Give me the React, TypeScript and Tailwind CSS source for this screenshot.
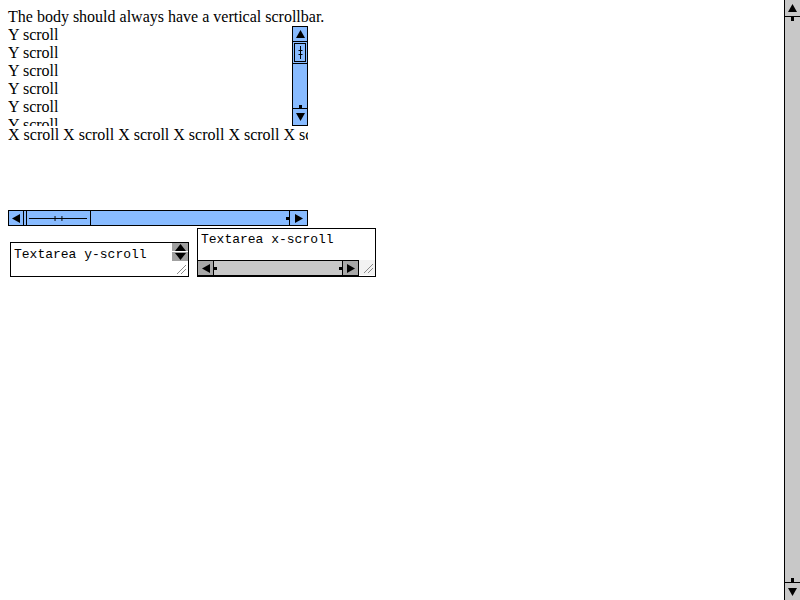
import React from 'react';

type Dir = 'up' | 'down' | 'left' | 'right';

const triPoints: Record<Dir, string> = {
  up: '4.5,0 9,8 0,8',
  down: '0,0 9,0 4.5,8',
  left: '8,0 8,9 0,4.5',
  right: '0,0 0,9 8,4.5',
};

function Tri({ dir }: { dir: Dir }) {
  const vert = dir === 'up' || dir === 'down';
  return (
    <svg width={vert ? 9 : 8} height={vert ? 8 : 9} viewBox={vert ? '0 0 9 8' : '0 0 8 9'}>
      <polygon points={triPoints[dir]} fill="#000" />
    </svg>
  );
}

// blue vertical scrollbar inside the Y box
function BlueVBar() {
  return (
    <div className="flex h-full w-[16px] shrink-0 flex-col border border-black bg-[#88bbff]">
      <div className="flex h-[15px] shrink-0 items-center justify-center border-b border-black">
        <Tri dir="up" />
      </div>
      <div className="flex h-[22px] shrink-0 items-center justify-center border-b border-black p-[1px]">
        <div className="flex h-full w-full items-center justify-center border border-black">
          <svg width="5" height="13" viewBox="0 0 5 13">
            <line x1="2.5" y1="0" x2="2.5" y2="13" stroke="#000" />
            <line x1="0.5" y1="4.5" x2="4.5" y2="4.5" stroke="#000" />
            <line x1="0.5" y1="8.5" x2="4.5" y2="8.5" stroke="#000" />
          </svg>
        </div>
      </div>
      <div className="flex flex-1 flex-col items-center justify-end">
        <div className="h-[3px] w-[3px] bg-black" />
      </div>
      <div className="flex h-[17px] shrink-0 items-center justify-center border-t border-black">
        <Tri dir="down" />
      </div>
    </div>
  );
}

// blue horizontal scrollbar under the X box
function BlueHBar() {
  return (
    <div className="flex h-[16px] w-full shrink-0 border border-black bg-[#88bbff]">
      <div className="flex w-[15px] shrink-0 items-center justify-center border-r border-black">
        <Tri dir="left" />
      </div>
      <div className="flex w-[67px] shrink-0 items-center border-r border-black px-[2px]">
        <div className="flex h-full w-full items-center border-l border-black">
          <svg width="62" height="5" viewBox="0 0 62 5">
            <line x1="2" y1="2.5" x2="61" y2="2.5" stroke="#000" />
            <line x1="28.5" y1="0" x2="28.5" y2="5" stroke="#000" />
            <line x1="35.5" y1="0" x2="35.5" y2="5" stroke="#000" />
          </svg>
        </div>
      </div>
      <div className="flex flex-1 items-center justify-end">
        <div className="h-[3px] w-[3px] bg-black" />
      </div>
      <div className="flex w-[18px] shrink-0 items-center justify-center border-l border-black">
        <Tri dir="right" />
      </div>
    </div>
  );
}

function Resizer({ bg }: { bg: string }) {
  return (
    <div className={`flex h-[15px] w-[16px] shrink-0 items-end justify-end overflow-hidden ${bg}`}>
      <svg width="16" height="15" viewBox="0 0 16 15">
        <line x1="14" y1="4" x2="5" y2="13" stroke="#8a8a8a" />
        <line x1="14" y1="8" x2="9" y2="13" stroke="#8a8a8a" />
      </svg>
    </div>
  );
}

function BodyBar() {
  return (
    <div className="flex h-[600px] w-[16px] shrink-0 flex-col border-l border-black bg-[#c8c8c8]">
      <div className="flex h-[17px] shrink-0 items-center justify-center border-b border-black">
        <Tri dir="up" />
      </div>
      <div className="flex flex-1 flex-col items-center justify-between">
        <div className="h-[4px] w-[3px] bg-black" />
        <div className="h-[4px] w-[3px] bg-black" />
      </div>
      <div className="flex h-[18px] shrink-0 items-center justify-center border-t border-black">
        <Tri dir="down" />
      </div>
    </div>
  );
}

export default function App() {
  const rows = Array.from({ length: 6 });
  return (
    <div className="flex h-[600px] w-[800px] overflow-hidden bg-white text-black">
      <div
        className="flex-1 p-[8px] text-[16px] leading-[18px]"
        style={{ fontFamily: '"Liberation Serif", serif' }}
      >
        <div className="whitespace-nowrap">The body should always have a vertical scrollbar.</div>

        {/* Y scroll box */}
        <div className="flex h-[100px] w-[300px] overflow-hidden">
          <div className="flex-1 overflow-hidden">
            {rows.map((_, i) => (
              <div key={i}>Y scroll</div>
            ))}
          </div>
          <BlueVBar />
        </div>

        {/* X scroll box */}
        <div className="flex h-[100px] w-[300px] flex-col overflow-hidden">
          <div className="flex-1 overflow-hidden whitespace-nowrap">
            X scroll X scroll X scroll X scroll X scroll X scroll
          </div>
          <BlueHBar />
        </div>

        {/* textareas */}
        <div
          className="mt-[2px] flex items-end gap-[8px] pl-[2px] text-[13px] leading-[15px]"
          style={{ fontFamily: '"Liberation Mono", monospace' }}
        >
          <div className="flex h-[35px] w-[179px] border border-black bg-white">
            <div className="flex-1 px-[3px] pt-[4px]">Textarea y-scroll</div>
            <div className="flex w-[16px] shrink-0 flex-col">
              <div className="flex h-[9px] shrink-0 items-center justify-center border-b border-white bg-[#a0a0a0]">
                <svg width="11" height="7" viewBox="0 0 11 7">
                  <polygon points="5.5,0 11,7 0,7" fill="#000" />
                </svg>
              </div>
              <div className="flex h-[9px] shrink-0 items-center justify-center bg-[#a0a0a0]">
                <svg width="11" height="7" viewBox="0 0 11 7">
                  <polygon points="0,0 11,0 5.5,7" fill="#000" />
                </svg>
              </div>
              <div className="flex-1" />
              <Resizer bg="bg-white" />
            </div>
          </div>

          <div className="flex h-[49px] w-[179px] flex-col border border-black bg-white">
            <div className="flex-1 px-[3px] pt-[3px]">Textarea x-scroll</div>
            <div className="flex h-[16px] shrink-0">
              <div className="flex flex-1 border-y border-black bg-[#c8c8c8]">
                <div className="flex w-[16px] shrink-0 items-center justify-center border-r border-black bg-[#a8a8a8]">
                  <Tri dir="left" />
                </div>
                <div className="flex flex-1 items-center justify-between">
                  <div className="h-[3px] w-[3px] bg-black" />
                  <div className="h-[3px] w-[3px] bg-black" />
                </div>
                <div className="flex w-[17px] shrink-0 items-center justify-center border-x border-black bg-[#a8a8a8]">
                  <Tri dir="right" />
                </div>
              </div>
              <Resizer bg="bg-[#f2f2f2]" />
            </div>
          </div>
        </div>
      </div>
      <BodyBar />
    </div>
  );
}
